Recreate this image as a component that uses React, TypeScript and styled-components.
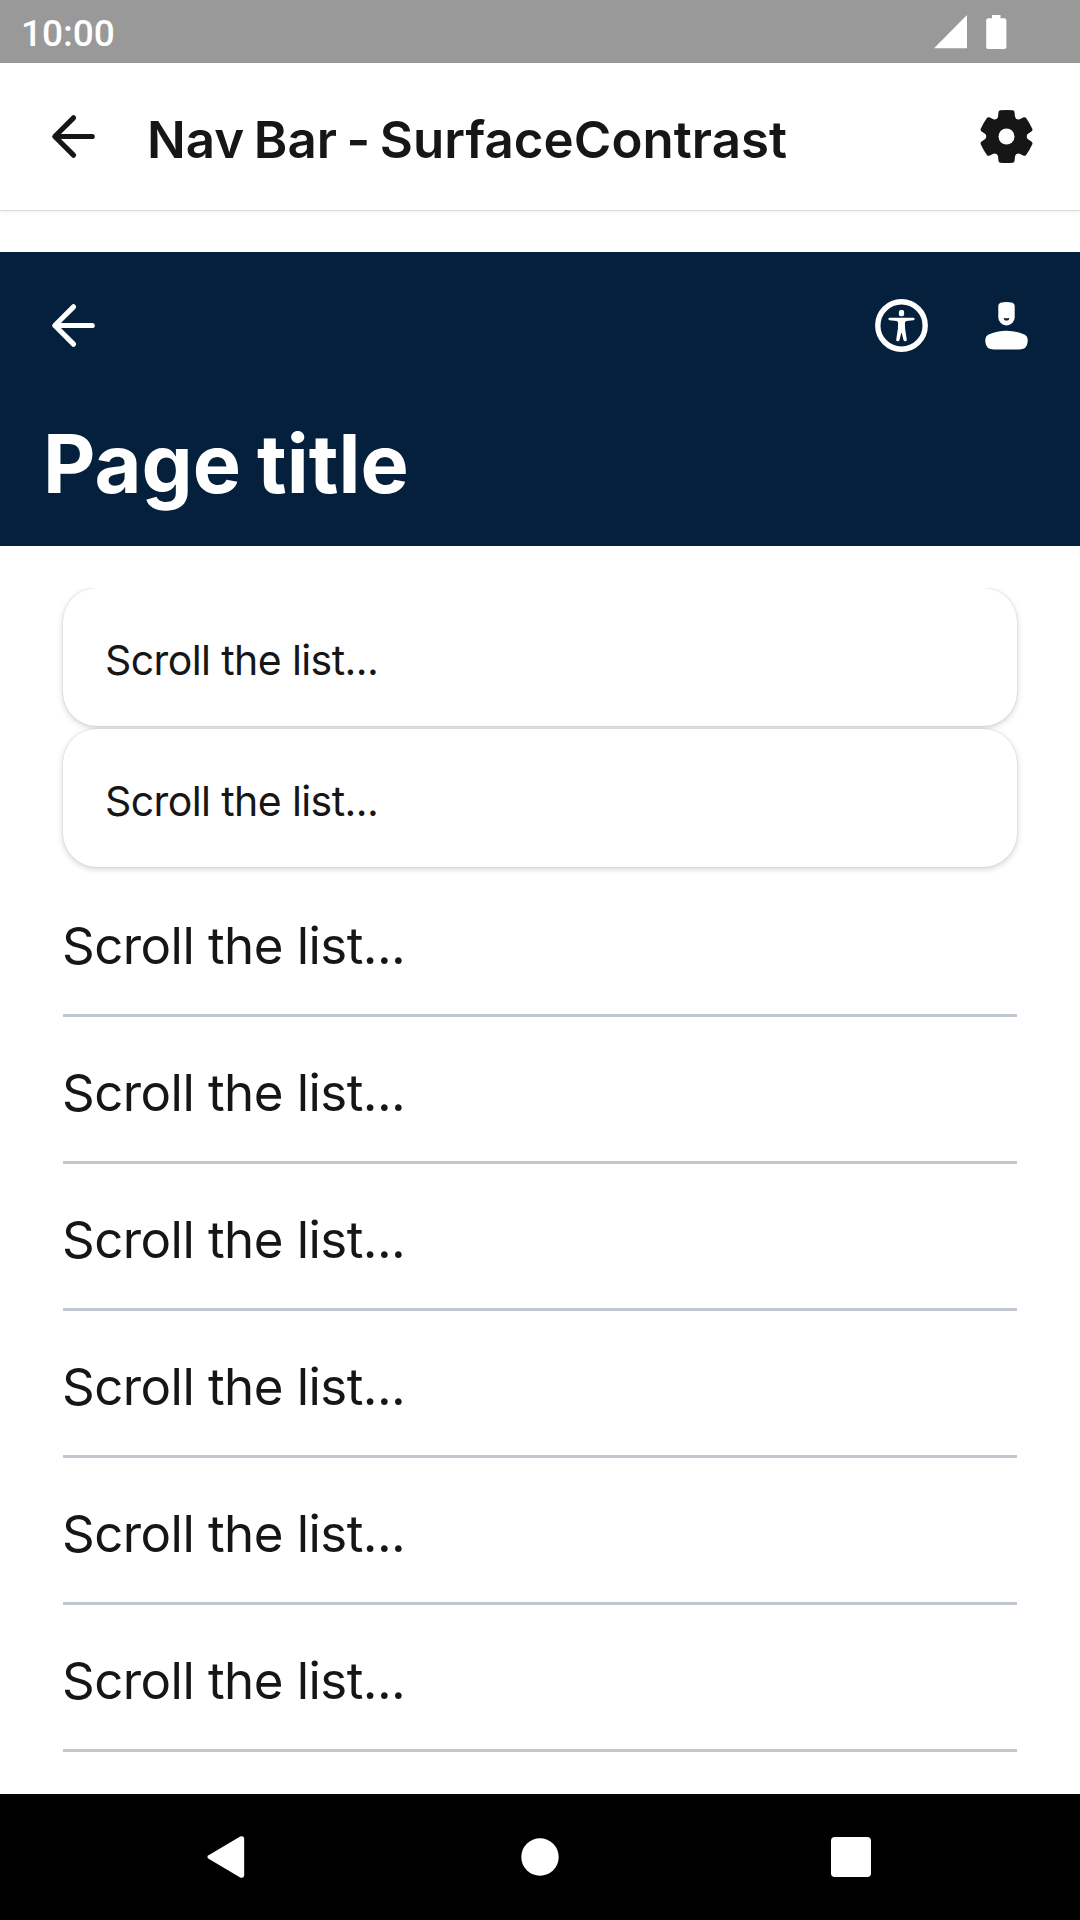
import React from "react";
import styled, { createGlobalStyle } from "styled-components";

const INK = "#161616";
const NAVY = "#05203c";

const GlobalStyle = createGlobalStyle`
  *, *::before, *::after { box-sizing: border-box; }
  body { margin: 0; background: #fff; }
`;

const Screen = styled.div`
  display: flex;
  flex-direction: column;
  width: 1080px;
  height: 1920px;
  overflow: hidden;
  background: #fff;
  color: ${INK};
  font-family: Inter, "Liberation Sans", sans-serif;
`;

const StatusBar = styled.div`
  display: flex;
  align-items: center;
  justify-content: space-between;
  flex: none;
  height: 63px;
  padding: 0 73px 0 21px;
  background: #999;
  color: #fff;
`;

const Clock = styled.span`
  padding-top: 4px;
  font: 500 37px/44px Roboto, sans-serif;
`;

const StatusIcons = styled.div`
  display: flex;
  align-items: center;
  gap: 19px;
`;

const AppBar = styled.header`
  display: flex;
  align-items: center;
  flex: none;
  height: 147px;
  padding: 0 42px;
  background: #fff;
  box-shadow: 0 1px 1px rgba(0, 0, 0, 0.1), 0 2px 6px rgba(0, 0, 0, 0.06);
`;

const AppTitle = styled.h1`
  flex: 1;
  margin: 0 0 0 42px;
  padding-top: 6px;
  font-size: 51px;
  font-weight: 600;
  line-height: 60px;
  letter-spacing: 0.05px;
  word-spacing: -3.4px;
  white-space: nowrap;
`;

const NavBar = styled.section`
  flex: none;
  height: 294px;
  margin-top: 42px;
  background: ${NAVY};
  color: #fff;
`;

const NavActions = styled.div`
  display: flex;
  align-items: center;
  height: 147px;
  padding: 0 42px;
`;

const NavTrailing = styled.div`
  display: flex;
  gap: 42px;
  margin-left: auto;
`;

const PageTitle = styled.h2`
  margin: 0;
  padding: 15px 43px 0;
  font-size: 81px;
  font-weight: 660;
  line-height: 100px;
  letter-spacing: 0;
  word-spacing: -3px;
`;

const List = styled.main`
  display: flex;
  flex-direction: column;
  flex: 1;
  min-height: 0;
  margin-top: 42px;
  padding: 0 63px;
  overflow: hidden;
`;

const Card = styled.div`
  display: flex;
  align-items: center;
  flex: none;
  height: 138px;
  margin-bottom: 3px;
  padding: 6px 42px 0;
  border-radius: 34px;
  background: #fff;
  box-shadow: 0 0 2px rgba(0, 0, 0, 0.12), 0 2px 6px rgba(0, 0, 0, 0.18);
  font-size: 41px;
  letter-spacing: -0.6px;
`;

const Row = styled.div`
  display: flex;
  align-items: center;
  flex: none;
  height: 147px;
  padding-top: 7px;
  border-bottom: 3px solid #c1c7cf;
  font-size: 51px;
  letter-spacing: -0.55px;
  text-indent: -1px;
`;

const SystemBar = styled.nav`
  display: grid;
  grid-template-columns: repeat(3, 311px);
  justify-content: center;
  place-items: center;
  flex: none;
  height: 126px;
  background: #000;
`;

const Icon = styled.svg`
  display: block;
  flex: none;
  overflow: visible;
`;

const BackIcon = () => (
  <Icon width="63" height="63" viewBox="-31.5 -31.5 63 63">
    <path
      d="M18.7 0H-18.5M0 -18.7L-18.7 0L0 18.7"
      fill="none"
      stroke="currentColor"
      strokeWidth="5.2"
      strokeLinecap="round"
      strokeLinejoin="round"
    />
  </Icon>
);

const TOOTH =
  "M-12 -16.5Q-8.8 -17 -8.5 -20L-8 -24.5Q-7.8 -26 -6.2 -26.2Q0 -26.8 6.2 -26.2Q7.8 -26 8 -24.5L8.5 -20Q8.8 -17 12 -16.5L0 0Z";

const GearIcon = () => (
  <Icon width="63" height="63" viewBox="-31.5 -31.5 63 63">
    <circle r="19.8" fill="currentColor" />
    {[0, 60, 120, 180, 240, 300].map((angle) => (
      <path key={angle} d={TOOTH} fill="currentColor" transform={`rotate(${angle})`} />
    ))}
    <circle r="8" fill="#fff" />
  </Icon>
);

const AccessibilityIcon = () => (
  <Icon width="63" height="63" viewBox="-31.5 -31.5 63 63">
    <circle r="23.7" fill="none" stroke="currentColor" strokeWidth="5.4" />
    <rect x="-2.6" y="-15.6" width="5.2" height="6.4" rx="1.8" fill="currentColor" />
    <path
      d="M-12 -7.8H12Q13.2 -7.6 13.2 -6.5Q13.2 -5.4 12 -5.2L5 -4.4Q3.4 -4 3.4 -2.4L3.6 3L5.3 14.3Q5.4 15.7 4.2 15.7H3.2Q2.2 15.7 2 14.6L0.2 7.4H-0.2L-2 14.6Q-2.2 15.7 -3.2 15.7H-4.2Q-5.4 15.7 -5.3 14.3L-3.6 3L-3.4 -2.4Q-3.4 -4 -5 -4.4L-12 -5.2Q-13.2 -5.4 -13.2 -6.5Q-13.2 -7.6 -12 -7.8Z"
      fill="currentColor"
    />
  </Icon>
);

const AccountIcon = () => (
  <Icon width="63" height="63" viewBox="-31.5 -31.5 63 63">
    <path
      d="M-8.2 -19.8Q-8.2 -22 -6 -22.8Q0 -24.4 6 -22.8Q8.2 -22 8.2 -19.8V-8.2A8.2 8.2 0 0 1 -8.2 -8.2Z"
      fill="currentColor"
    />
    <path d="M-2.8 -7.6Q0 -7 2.8 -7.6Q2.6 -5 0 -5Q-2.6 -5 -2.8 -7.6Z" fill={NAVY} />
    <path
      d="M-21.2 14Q-21.2 10.8 -18.4 9.3Q-9.5 5.3 0 5.3Q9.5 5.3 18.4 9.3Q21.2 10.8 21.2 14V16Q20.8 24 12.5 24H-12.5Q-20.8 24 -21.2 16Z"
      fill="currentColor"
    />
  </Icon>
);

const cards = ["Scroll the list...", "Scroll the list..."];
const rows = Array.from({ length: 6 }, () => "Scroll the list...");

export default function App() {
  return (
    <Screen>
      <GlobalStyle />
      <StatusBar>
        <Clock>10:00</Clock>
        <StatusIcons>
          <Icon width="33" height="34" viewBox="0 0 33 34">
            <path d="M0 33.3H33V0Z" fill="#fff" />
          </Icon>
          <Icon width="21" height="34" viewBox="0 0 21 34">
            <path
              d="M6 0H14.5V3.3H18.2Q20.4 3.3 20.4 5.5V32Q20.4 34 18.4 34H2.2Q.2 34 .2 32V5.5Q.2 3.3 2.4 3.3H6Z"
              fill="#fff"
            />
          </Icon>
        </StatusIcons>
      </StatusBar>
      <AppBar>
        <BackIcon />
        <AppTitle>Nav Bar - SurfaceContrast</AppTitle>
        <GearIcon />
      </AppBar>
      <NavBar>
        <NavActions>
          <BackIcon />
          <NavTrailing>
            <AccessibilityIcon />
            <AccountIcon />
          </NavTrailing>
        </NavActions>
        <PageTitle>Page title</PageTitle>
      </NavBar>
      <List>
        {cards.map((label, i) => (
          <Card key={i}>{label}</Card>
        ))}
        {rows.map((label, i) => (
          <Row key={i}>{label}</Row>
        ))}
      </List>
      <SystemBar>
        <Icon width="45" height="42" viewBox="0 0 45 42">
          <path
            d="M1.6 19.2L33.2 .5Q36.8 -.8 37.2 2.6V39.4Q36.8 42.8 33.2 41.5L1.6 22.8Q-.8 21 1.6 19.2Z"
            fill="#fff"
          />
        </Icon>
        <Icon width="38" height="38" viewBox="0 0 38 38">
          <circle cx="19" cy="19" r="18.7" fill="#fff" />
        </Icon>
        <Icon width="40" height="40" viewBox="0 0 40 40">
          <rect width="40" height="40" rx="3.8" fill="#fff" />
        </Icon>
      </SystemBar>
    </Screen>
  );
}
